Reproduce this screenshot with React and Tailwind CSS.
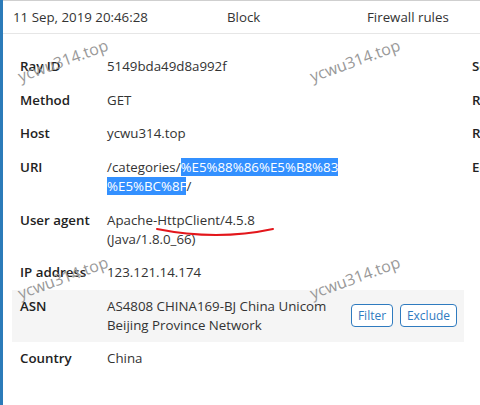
import React from "react";

const rows = [
  { label: "Ray ID", value: "5149bda49d8a992f" },
  { label: "Method", value: "GET" },
  { label: "Host", value: "ycwu314.top" },
  {
    label: "URI",
    value: (
      <>
        /categories/
        <span className="bg-[#3390ff] text-white">%E5%88%86%E5%B8%83</span>
        <br />
        <span className="bg-[#3390ff] text-white">%E5%BC%8F</span>/
      </>
    ),
  },
  {
    label: "User agent",
    value: (
      <>
        Apache-HttpClient/4.5.8
        <br />
        (Java/1.8.0_66)
      </>
    ),
  },
  { label: "IP address", value: "123.121.14.174" },
];

function Row({ label, children, gray, actions }) {
  return (
    <div
      className={
        "flex items-center py-[7.3px] pl-[8px] pr-[7px] " +
        (gray ? "bg-[#f5f5f5]" : "")
      }
    >
      <div className="w-[87px] shrink-0 self-start font-semibold text-[#222]">{label}</div>
      <div className="flex-1 text-[#333]">{children}</div>
      {actions}
    </div>
  );
}

function Watermark({ x, y }) {
  return (
    <span
      className="pointer-events-none absolute text-[16px] text-[#999] whitespace-nowrap"
      style={{ left: x, top: y, transform: "translate(-50%, -50%) rotate(-20deg)" }}
    >
      ycwu314.top
    </span>
  );
}

export default function App() {
  return (
    <div
      className="relative w-[480px] h-[405px] overflow-hidden bg-white border-l-[3px] border-[#2b7bb9] text-[13.3px] leading-[19px]"
      style={{ fontFamily: '"Open Sans", "Noto Sans", sans-serif' }}
    >
      <div className="border-t border-[#cfcfcf]" />
      <div className="flex items-center h-[33px] border-b border-[#e6e6e6] pl-[10px] text-[#333] whitespace-nowrap">
        <div className="w-[214px]">11 Sep, 2019 20:46:28</div>
        <div className="w-[140px]">Block</div>
        <div>Firewall rules</div>
      </div>
      <div className="flex pt-[16px] pl-[9px] w-[700px]">
        <div className="w-[452px] shrink-0">
          {rows.map((r) => (
            <Row key={r.label} label={r.label}>
              {r.value}
            </Row>
          ))}
          <Row
            label="ASN"
            gray
            actions={
              <div className="flex gap-[7px] self-center">
                <button className="h-[23px] w-[42px] rounded-[4px] border border-[#2f7bbf] bg-white text-[12px] text-[#2f7bbf]">
                  Filter
                </button>
                <button className="h-[23px] w-[57px] rounded-[4px] border border-[#2f7bbf] bg-white text-[12px] text-[#2f7bbf]">
                  Exclude
                </button>
              </div>
            }
          >
            AS4808 CHINA169-BJ China Unicom
            <br />
            Beijing Province Network
          </Row>
          <Row label="Country">China</Row>
        </div>
        <div className="ml-[8px] font-semibold text-[#222] whitespace-nowrap">
          <div className="py-[7.3px]">Service</div>
          <div className="py-[7.3px]">Rule ID</div>
          <div className="py-[7.3px]">Rule message</div>
          <div className="py-[7.3px]">Edge response</div>
        </div>
      </div>
      <svg className="pointer-events-none absolute left-0 top-0" width="480" height="405">
        <path d="M154 229 Q 214 241 270 229" stroke="#e3161b" strokeWidth="2" fill="none" strokeLinecap="round" />
      </svg>
      <Watermark x={60} y={61} />
      <Watermark x={352} y={61} />
      <Watermark x={60} y={278} />
      <Watermark x={352} y={278} />
    </div>
  );
}
